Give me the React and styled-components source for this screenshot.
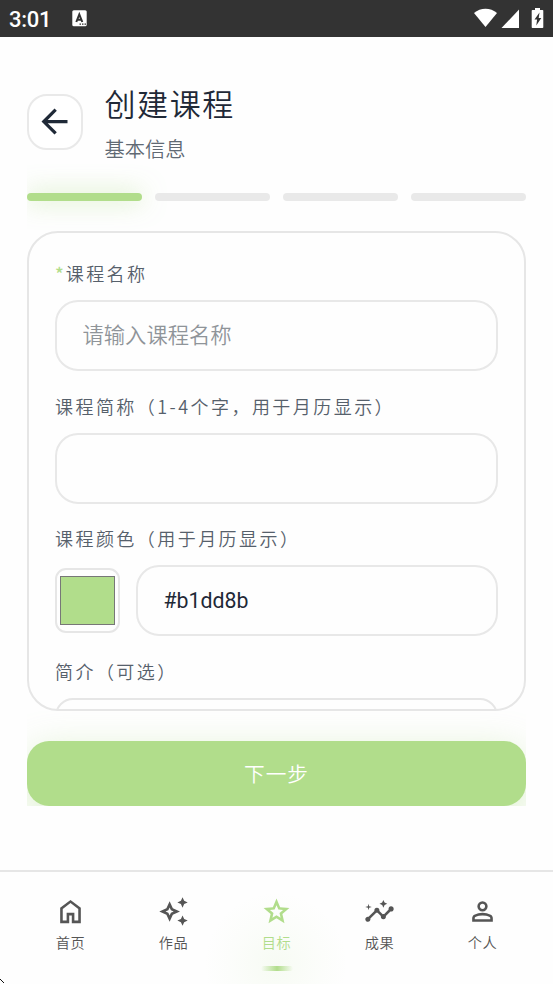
import React from "react";
import styled, { createGlobalStyle } from "styled-components";
import { MdInsights, MdOutlineAutoAwesome } from "react-icons/md";

const GlobalStyle = createGlobalStyle`
  * { box-sizing: border-box; }
  body { margin: 0; background: #fefefe; }
  button, input { font: inherit; }
`;

const Screen = styled.div`
  width: 553px;
  height: 984px;
  display: flex;
  flex-direction: column;
  overflow: hidden;
  position: relative;
  background: #fefefe;
  font-family: Roboto, "Noto Sans CJK SC", sans-serif;
  color: #1f2937;
`;

const StatusBar = styled.div`
  height: 37px;
  flex: none;
  display: flex;
  align-items: center;
  padding: 0 9px;
  background: #333333;
  color: #fff;
`;

const Clock = styled.span`
  width: 63px;
  font-size: 22px;
  font-weight: 500;
  line-height: 36px;
  letter-spacing: -0.3px;
  padding-top: 2px;
`;

const StatusIcons = styled.svg`
  margin-left: auto;
  margin-right: -9px;
`;

const Main = styled.main`
  flex: 1;
  display: flex;
  flex-direction: column;
  padding: 45px 27px 0;
`;

const Header = styled.header`
  display: flex;
  align-items: center;
  height: 79px;
  gap: 21.5px;
`;

const BackButton = styled.button`
  width: 56px;
  height: 56px;
  padding: 0 2px 0 0;
  display: grid;
  place-items: center;
  border: 2px solid #e9e9e9;
  border-radius: 20px;
  background: #fff;
  color: #1f2937;
`;

const Title = styled.h1`
  margin: 0;
  font-size: 31px;
  line-height: 42px;
  letter-spacing: 1.6px;
  font-weight: 350;
`;

const Subtitle = styled.p`
  margin: 8px 0 -6px;
  font-size: 20.3px;
  line-height: 30px;
  font-weight: 350;
  color: #606973;
`;

const Steps = styled.div`
  display: grid;
  grid-template-columns: repeat(4, 1fr);
  gap: 13px;
  padding: 32px 0 30px;
  flex: none;
  overflow: hidden;
`;

const Step = styled.div`
  height: 8px;
  border-radius: 4px;
  background: ${(p) => (p.$active ? "#b1dd8b" : "#e9e9e9")};
  box-shadow: ${(p) => (p.$active ? "0 0 24px rgba(177, 221, 139, 0.7)" : "none")};
`;

const Card = styled.section`
  height: 480px;
  flex: none;
  overflow: hidden;
  padding: 25px 26px 0 26px;
  border: 2px solid #e6e6e6;
  border-radius: 31px;
`;

const Label = styled.label`
  display: flex;
  height: 30px;
  align-items: center;
  margin-bottom: 12px;
  font-family: "Noto Sans CJK SC", sans-serif;
  font-size: 18px;
  font-weight: 350;
  letter-spacing: 2.45px;
  white-space: nowrap;
  color: #56606b;
`;

const Required = styled.span`
  color: #b1dd8b;
  letter-spacing: 0;
  font-weight: 500;
  margin-right: 2px;
`;

const Input = styled.input`
  display: block;
  width: 100%;
  min-width: 0;
  height: 71px;
  padding: 0 25.5px;
  border: 2px solid #e8e8e8;
  border-radius: 23px;
  background: transparent;
  outline: none;
  font-size: 21.3px;
  color: #1f2937;
  &::placeholder { color: #8f9499; font-weight: 350; opacity: 1; }
`;

const Field = styled.div`
  height: 132.5px;
`;

const ColorRow = styled.div`
  display: flex;
  align-items: center;
  gap: 16px;
`;

const Swatch = styled.div`
  width: 65px;
  height: 65px;
  flex: none;
  padding: 6px 3px;
  border: 2px solid #e6e6e6;
  border-radius: 11px;
`;

const SwatchColor = styled.div`
  height: 49px;
  border: 1px solid #777777;
  background: #b1dd8b;
`;

const Description = styled.div`
  height: 120px;
  border: 2px solid #e6e6e6;
  border-radius: 18px;
`;

const Actions = styled.div`
  height: 95px;
  flex: none;
  padding-top: 30px;
  overflow: hidden;
`;

const NextButton = styled.button`
  display: block;
  width: 100%;
  height: 65px;
  padding: 0 0 1px;
  border: 0;
  border-radius: 22px;
  background: #b1dd8b;
  box-shadow: 0 10px 38px rgba(177, 221, 139, 0.45);
  color: #fff;
  font-size: 20.7px;
  font-weight: 350;
  letter-spacing: 1px;
`;

const Nav = styled.nav`
  height: 114px;
  flex: none;
  display: grid;
  grid-template-columns: repeat(5, 103px);
  justify-content: center;
  border-top: 2px solid #e6e6e6;
  background: radial-gradient(circle 72px at 276px 92px, rgba(177, 221, 139, 0.09), rgba(177, 221, 139, 0.03) 60%, transparent);
  overflow: hidden;
`;

const NavItem = styled.div`
  display: flex;
  flex-direction: column;
  align-items: center;
  padding-top: 24px;
  color: ${(p) => (p.$active ? "#b1dd8b" : "#555555")};
`;

const NavText = styled.span`
  margin-top: 5px;
  font-size: 14.2px;
  line-height: 22px;
  letter-spacing: 0.5px;
  font-weight: 350;
`;

const Indicator = styled.span`
  width: 32px;
  height: 5px;
  margin-top: 12px;
  border-radius: 3px;
  background: linear-gradient(90deg, transparent, #b1dd8b, transparent);
`;

const Cursor = styled.svg`
  position: absolute;
  left: 0;
  bottom: 0;
`;

const Symbol = ({ size, d }) => (
  <svg width={size} height={size} viewBox="0 -960 960 960" fill="currentColor">
    <path d={d} />
  </svg>
);

const ARROW = "m313-440 224 224-57 56-320-320 320-320 57 56-224 224h487v80H313Z";
const HOME = "M240-200h120v-240h240v240h120v-360L480-740 240-560v360Zm-80 80v-480l320-240 320 240v480H520v-240h-80v240H160Z";
const STAR = "m354-287 126-76 126 77-33-144 111-96-146-13-58-136-58 135-146 13 111 97-33 143ZM233-120l65-281L80-590l288-25 112-265 112 265 288 25-218 189 65 281-247-149-247 149Z";
const PERSON = "M480-480q-66 0-113-47t-47-113q0-66 47-113t113-47q66 0 113 47t47 113q0 66-47 113t-113 47ZM160-160v-112q0-34 17.5-62.5T224-378q62-31 126-46.5T480-440q66 0 130 15.5T736-378q29 15 46.5 43.5T800-272v112H160Zm80-80h480v-32q0-11-5.5-20T700-306q-54-27-109-40.5T480-360q-56 0-111 13.5T260-306q-9 5-14.5 14t-5.5 20v32Zm240-320q33 0 56.5-23.5T560-640q0-33-23.5-56.5T480-720q-33 0-56.5 23.5T400-640q0 33 23.5 56.5T480-560Z";

const tabs = [
  { text: "首页", icon: <Symbol size={31} d={HOME} /> },
  { text: "作品", icon: <MdOutlineAutoAwesome size={31} /> },
  { text: "目标", icon: <Symbol size={31} d={STAR} />, active: true },
  { text: "成果", icon: <MdInsights size={31} /> },
  { text: "个人", icon: <Symbol size={31} d={PERSON} /> },
];

export default function App() {
  return (
    <Screen>
      <GlobalStyle />
      <StatusBar>
        <Clock>3:01</Clock>
        <svg width="16" height="17" viewBox="0 0 16 17">
          <rect x="0.3" y="0.3" width="14.4" height="16" rx="1.5" fill="#fff" />
          <path d="M4.3 12 7.300 4.500l3 7.500M5.300 9.700h4" fill="none" stroke="#333" strokeWidth="2" />
          <path d="M7.500 14.200h1.500m1 0h1.500m1 0H14" stroke="#333" strokeWidth="1.300" />
        </svg>
        <StatusIcons width="80" height="37" viewBox="0 0 80 37" fill="#fff">
          <path d="M1 13C7.500 7.300 17.500 7.300 24 13L12.500 27Z" />
          <path d="M46 9.500V28H28.500Z" />
          <path d="M59.500 10H62V8h5v2h2.500q.8 0 .8.800v16.400q0 .8-.8.800h-10q-.8 0-.8-.8V10.800q0-.8.800-.8Z" />
          <path d="M66.500 12.500 61.500 19.500h2.600l-.8 6 5-7.500h-2.600Z" fill="#333" />
        </StatusIcons>
      </StatusBar>
      <Main>
        <Header>
          <BackButton aria-label="返回"><Symbol size={39} d={ARROW} /></BackButton>
          <div>
            <Title>创建课程</Title>
            <Subtitle>基本信息</Subtitle>
          </div>
        </Header>
        <Steps>
          <Step $active />
          <Step />
          <Step />
          <Step />
        </Steps>
        <Card>
          <Field>
            <Label><Required>*</Required>课程名称</Label>
            <Input placeholder="请输入课程名称" />
          </Field>
          <Field>
            <Label>课程简称（1-4个字，用于月历显示）</Label>
            <Input />
          </Field>
          <Field>
            <Label>课程颜色（用于月历显示）</Label>
            <ColorRow>
              <Swatch><SwatchColor /></Swatch>
              <Input defaultValue="#b1dd8b" />
            </ColorRow>
          </Field>
          <Field>
            <Label>简介（可选）</Label>
            <Description />
          </Field>
        </Card>
        <Actions>
          <NextButton>下一步</NextButton>
        </Actions>
      </Main>
      <Nav>
        {tabs.map((t) => (
          <NavItem key={t.text} $active={t.active}>
            {t.icon}
            <NavText>{t.text}</NavText>
            {t.active && <Indicator />}
          </NavItem>
        ))}
      </Nav>
      <Cursor width="5" height="5" viewBox="0 0 5 5">
        <path d="M0 0h1v1h1v1h1v1h1v1H3V3H2V2H1V1H0Z" fill="#111" />
      </Cursor>
    </Screen>
  );
}
